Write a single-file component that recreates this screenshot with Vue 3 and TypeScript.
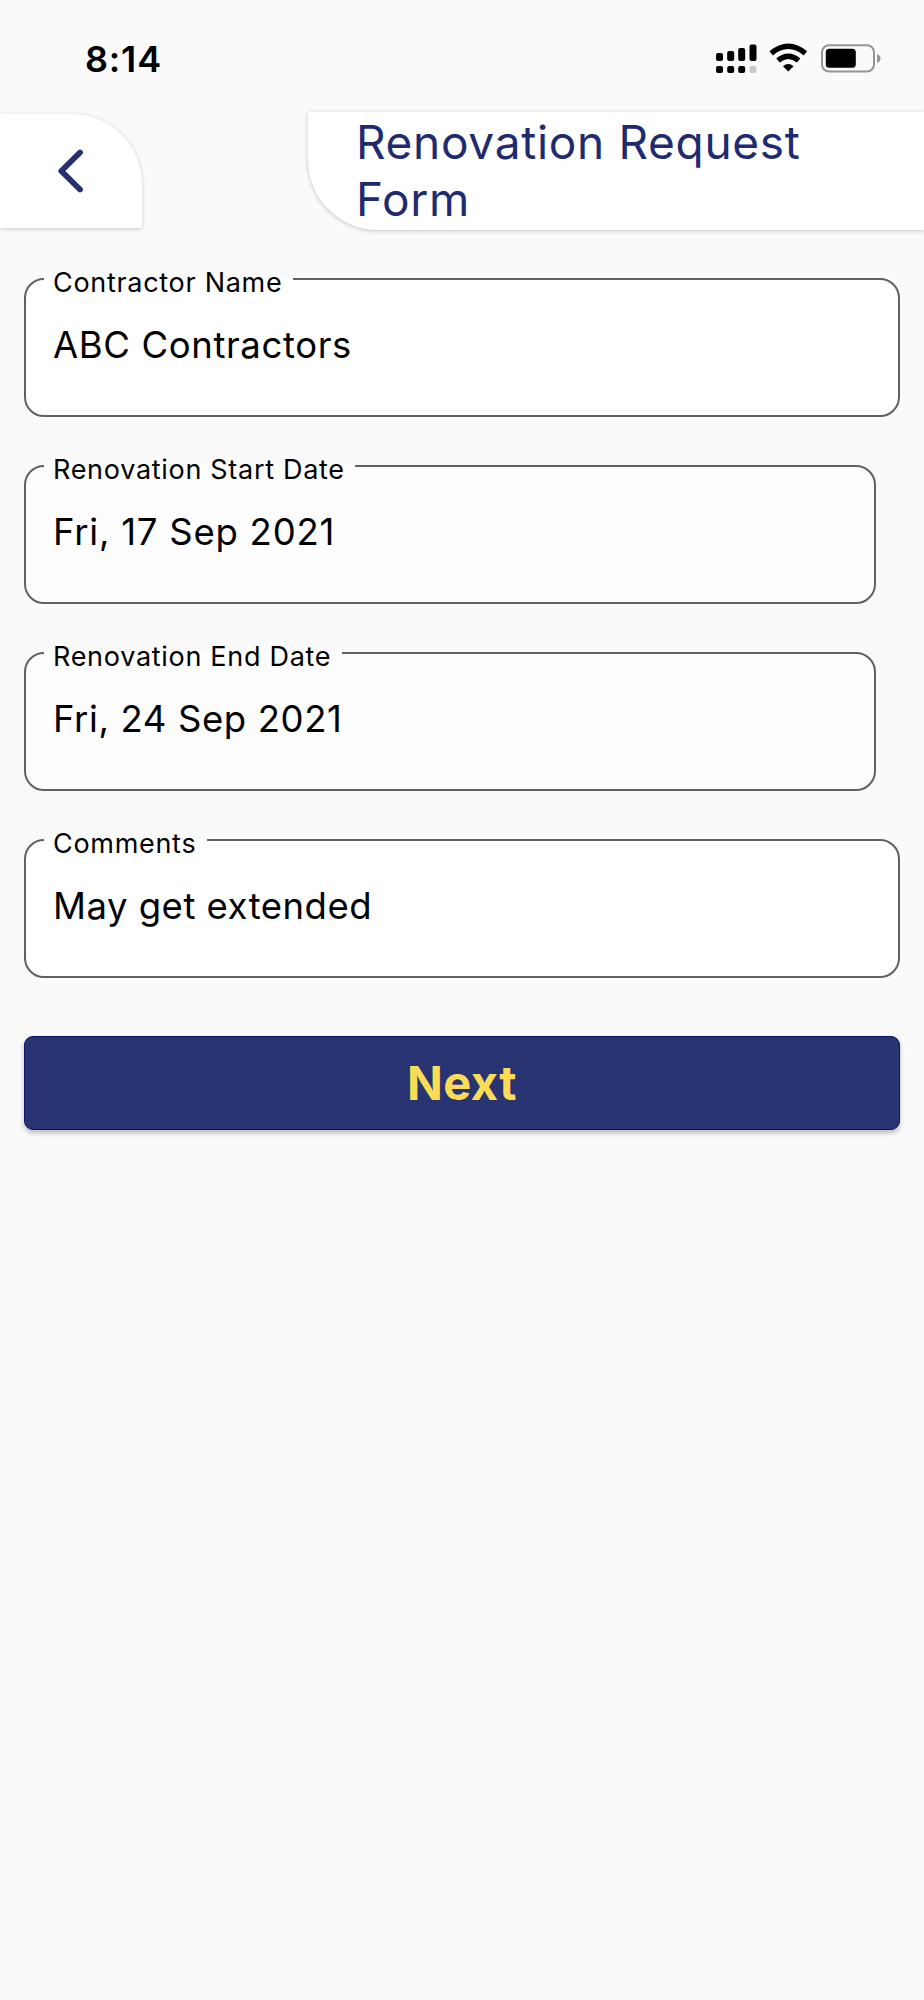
<script setup lang="ts">
interface Field {
  label: string
  value: string
  date?: boolean
  tone: string
}

const fields: Field[] = [
  { label: 'Contractor Name', value: 'ABC Contractors', tone: 'name' },
  { label: 'Renovation Start Date', value: 'Fri, 17 Sep 2021', date: true, tone: 'start' },
  { label: 'Renovation End Date', value: 'Fri, 24 Sep 2021', date: true, tone: 'end' },
  { label: 'Comments', value: 'May get extended', tone: 'comments' },
]
</script>

<template>
  <main class="screen">
    <div class="status">
      <span class="time">8:14</span>
      <svg class="indicators" width="170" height="34" viewBox="0 0 170 34" aria-hidden="true">
        <rect x="0" y="10" width="7" height="8" rx="2" />
        <rect x="11.2" y="8" width="7" height="10" rx="2" />
        <rect x="22.2" y="5" width="7" height="13" rx="2" />
        <rect x="33.5" y="1.5" width="7" height="16.5" rx="2" />
        <rect x="0" y="23" width="7" height="7" rx="2" />
        <rect x="11.2" y="23" width="7" height="7" rx="2" />
        <rect x="22.2" y="23" width="7" height="7" rx="2" />
        <rect x="33.5" y="23" width="7" height="7" rx="2" fill="#c9c9c9" />
        <g fill="none" stroke="#000" stroke-width="5.4">
          <path d="M55.2 10.3 Q72.3 -3.7 89.4 10.3" />
          <path d="M62 17.5 Q72.3 8.9 82.6 17.5" />
        </g>
        <path d="M67 23.3 Q72.3 18.8 77.6 23.3 L72.3 28.6 Z" />
        <rect x="106" y="2.2" width="52" height="26.4" rx="7" fill="none" stroke="#959595" stroke-width="2" />
        <rect x="109.8" y="5.8" width="30" height="19" rx="3.5" />
        <path d="M161 11.2 Q164.5 12.2 164.5 15.5 Q164.5 18.8 161 19.8 Z" fill="#959595" />
      </svg>
    </div>

    <header class="header">
      <button class="back" aria-label="Back">
        <svg width="30" height="46" viewBox="0 0 30 46">
          <path d="M25 4.5 L6.3 23 L25 41.5" fill="none" stroke="#25306f" stroke-width="5.8" stroke-linecap="round" stroke-linejoin="round" />
        </svg>
      </button>
      <h1 class="title">Renovation Request<br />Form</h1>
    </header>

    <form class="form" @submit.prevent>
      <fieldset v-for="f in fields" :key="f.label" class="field" :class="[f.tone, { date: f.date }]">
        <legend><span>{{ f.label }}</span></legend>
        <div class="value">{{ f.value }}</div>
      </fieldset>
      <button class="next" type="submit">Next</button>
    </form>
  </main>
</template>

<style>
body {
  background: #fafafa;
}
</style>

<style scoped>
.screen {
  box-sizing: border-box;
  width: 924px;
  height: 2000px;
  overflow: hidden;
  background: #fafafa;
  color: #000;
  font-family: Inter, "Liberation Sans", sans-serif;
}
.status {
  display: flex;
  justify-content: space-between;
  align-items: flex-start;
  box-sizing: border-box;
  height: 111.5px;
  padding: 37px 38px 0 85px;
}
.time {
  font-size: 36px;
  font-weight: 600;
  line-height: 44px;
  letter-spacing: 0.8px;
}
.indicators {
  margin-top: 6px;
}
.header {
  display: flex;
  justify-content: space-between;
  align-items: flex-start;
  height: 153px;
}
.back {
  display: flex;
  align-items: center;
  box-sizing: border-box;
  width: 142px;
  height: 114px;
  margin: 2.5px 0 0;
  padding: 0 0 0 55px;
  border: 0;
  border-radius: 0 70px 0 0;
  background: #fff;
  box-shadow: 0 1px 4px rgba(0, 0, 0, 0.2);
}
.title {
  box-sizing: border-box;
  width: 616px;
  height: 118.5px;
  margin: 0;
  padding: 2.5px 0 0 48px;
  border-radius: 0 0 0 70px;
  background: #fff;
  box-shadow: 0 1px 4px rgba(0, 0, 0, 0.22);
  color: #1f2b70;
  font-size: 46px;
  font-weight: 400;
  line-height: 56.7px;
  letter-spacing: 0.68px;
  white-space: nowrap;
}
.form {
  display: flex;
  flex-direction: column;
  padding: 0 24px;
}
.field {
  box-sizing: border-box;
  width: 876px;
  height: 152px;
  min-width: 0;
  margin: 0 0 35.3px;
  padding: 0 18px;
  border: 2px solid #616161;
  border-radius: 20px;
  background: #fff;
}
.date {
  width: 852px;
  background: #fdfdfd;
}
.field legend {
  height: 28px;
  padding: 0 10.5px 0 9px;
  font-size: 27px;
  font-weight: 400;
  line-height: 36.5px;
  letter-spacing: 0.7px;
  white-space: nowrap;
}
.value {
  padding: 30px 0 0 9px;
  font-size: 36.5px;
  font-weight: 400;
  line-height: 44px;
  letter-spacing: 0.62px;
  white-space: nowrap;
}
.start .value {
  letter-spacing: 0.76px;
}
.comments .value {
  letter-spacing: 0.5px;
}
.next {
  height: 94.5px;
  margin-top: 22px;
  padding: 0;
  border: 1px solid #0e1565;
  border-radius: 9px;
  background: #283371;
  box-shadow: 0 3px 5px rgba(0, 0, 0, 0.25);
  color: #fbdc57;
  font: 700 47px/70px Inter, "Liberation Sans", sans-serif;
  letter-spacing: 0.5px;
}
</style>
